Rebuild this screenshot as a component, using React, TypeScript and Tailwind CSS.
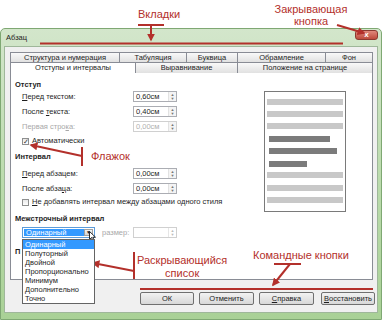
import React from "react";

const RED = "#b3302b";

function U({ children }: { children: React.ReactNode }) {
  return <span className="underline underline-offset-[1px]">{children}</span>;
}

function Spin({ value, disabled }: { value: string; disabled?: boolean }) {
  return (
    <div
      className={`flex h-[11px] w-[44px] items-center border bg-white ${
        disabled ? "border-[#d0d0d0] text-[#b0b0b0]" : "border-[#abadb3] text-[#1e1e1e]"
      }`}
    >
      <span className="flex-1 pl-[2px] leading-none">{value}</span>
      <div className="flex h-full w-[8px] flex-col items-center justify-center border-l border-[#e2e2e2] bg-[#f4f4f4] text-[4px] leading-[4px] text-[#777]">
        <span>▲</span>
        <span>▼</span>
      </div>
    </div>
  );
}

function Field({ label, value, disabled, mt }: { label: React.ReactNode; value: string; disabled?: boolean; mt: string }) {
  return (
    <div className={`flex h-[11px] items-center ${mt}`}>
      <span className={`w-[118px] pl-[7px] ${disabled ? "text-[#a8a8a8]" : ""}`}>{label}</span>
      <Spin value={value} disabled={disabled} />
    </div>
  );
}

function Check({ checked, label, mt }: { checked?: boolean; label: React.ReactNode; mt: string }) {
  return (
    <div className={`flex h-[10px] items-center whitespace-nowrap pl-[7px] ${mt}`}>
      <div className="flex h-[7px] w-[7px] items-center justify-center border border-[#8e8f8f] bg-gradient-to-b from-[#e9e9e9] to-white text-[7px] leading-none text-[#333]">
        {checked ? "✓" : ""}
      </div>
      <span className="ml-[3px]">{label}</span>
    </div>
  );
}

function Tab({ w, children, active }: { w: string; children: React.ReactNode; active?: boolean }) {
  return (
    <div
      className={`flex items-center justify-center whitespace-nowrap border-t border-r border-[#898c95] first:border-l ${w} ${
        active ? "bg-white" : "bg-gradient-to-b from-[#f9f9f9] to-[#e1e1e1]"
      }`}
    >
      {children}
    </div>
  );
}

function Btn({ w, children }: { w: string; children: React.ReactNode }) {
  return (
    <div
      className={`flex h-[13px] items-center justify-center rounded-[2px] border border-[#707070] bg-gradient-to-b from-[#f2f2f2] to-[#d8d8d8] ${w}`}
    >
      {children}
    </div>
  );
}

const bars = [
  { t: "mt-[7px]", c: "ml-[2px] w-[76px] bg-[#c8c8c8]" },
  { t: "mt-[6px]", c: "ml-[2px] w-[76px] bg-[#c8c8c8]" },
  { t: "mt-[6px]", c: "ml-[2px] w-[76px] bg-[#c8c8c8]" },
  { t: "mt-[7px]", c: "ml-[4px] w-[61px] bg-[#7b7b7b]" },
  { t: "mt-[6px]", c: "ml-[4px] w-[68px] bg-[#7b7b7b]" },
  { t: "mt-[7px]", c: "ml-[4px] w-[38px] bg-[#7b7b7b]" },
  { t: "mt-[5px]", c: "ml-[2px] w-[76px] bg-[#c8c8c8]" },
  { t: "mt-[7px]", c: "ml-[2px] w-[76px] bg-[#c8c8c8]" },
  { t: "mt-[6px]", c: "ml-[2px] w-[76px] bg-[#c8c8c8]" },
];

const options = ["Одинарный", "Полуторный", "Двойной", "Пропорционально", "Минимум", "Дополнительно", "Точно"];

export default function App() {
  return (
    <div className="relative h-[320px] w-[382px] overflow-hidden bg-white font-['Liberation_Sans',Arial,sans-serif]">
      <div className="pt-[28px]">
        {/* window */}
        <div className="flex h-[292px] flex-col rounded-t-[5px] border border-[#7fa873] bg-gradient-to-b from-[#d3e6cb] via-[#bcdcae] to-[#a9d196] px-[3px] pb-[6px]">
          {/* title bar */}
          <div className="flex h-[17px] items-start justify-between">
            <span className="mt-[5px] pl-[2px] text-[7.5px] leading-none text-[#222]">Абзац</span>
            <div className="mt-[1px] flex h-[10px] w-[23px] items-center justify-center rounded-[3px] border border-[#8a3a30] bg-gradient-to-b from-[#e0897c] to-[#bd4a3c] text-[8px] font-bold leading-none text-white">
              x
            </div>
          </div>
          {/* client area */}
          <div className="flex flex-1 flex-col border border-[#9fb79a] bg-[#f0f0f0] pl-[5px] pr-[2px] pt-[5px] text-[7.5px] leading-none text-[#1e1e1e]">
            <div className="flex h-[10px]">
              <Tab w="w-[110px]">Структура и нумерация</Tab>
              <Tab w="w-[67px]">Табуляция</Tab>
              <Tab w="w-[51px]">Буквица</Tab>
              <Tab w="w-[88px]">Обрамление</Tab>
              <Tab w="w-[47px]">Фон</Tab>
            </div>
            <div className="flex h-[11px]">
              <Tab w="w-[126px]" active>
                Отступы и интервалы
              </Tab>
              <Tab w="w-[102px]">Выравнивание</Tab>
              <Tab w="w-[135px]">Положение на странице</Tab>
            </div>
            {/* panel */}
            <div className="flex h-[207px] w-[363px] border-x border-b border-[#898c95] bg-white pl-[4px]">
              <div className="flex w-[249px] flex-col pt-[8px]">
                <div className="h-[9px] font-bold">Отступ</div>
                <Field mt="mt-[1px]" label={<><U>П</U>еред текстом:</>} value="0,60см" />
                <Field mt="mt-[4px]" label={<>После <U>т</U>екста:</>} value="0,40см" />
                <Field mt="mt-[4px]" label={<>Первая стро<U>к</U>а:</>} value="0,00см" disabled />
                <Check mt="mt-[4px]" checked label={<><U>А</U>втоматически</>} />
                <div className="mt-[7px] h-[9px] font-bold">Интервал</div>
                <Field mt="mt-[6px]" label={<><U>П</U>еред абзацем:</>} value="0,00см" />
                <Field mt="mt-[4px]" label={<>После абза<U>ц</U>а:</>} value="0,00см" />
                <Check mt="mt-[3px]" label={<><U>Н</U>е добавлять интервал между абзацами одного стиля</>} />
                <div className="mt-[8px] h-[9px] font-bold">Межстрочный интервал</div>
                <div className="mt-[3px] flex h-[11px] items-center pl-[7px]">
                  <div className="relative z-10 flex h-[11px] w-[73px] items-center border border-[#5c9bd8] bg-white p-[1px]">
                    <span className="flex h-full w-[60px] items-center bg-[#3399ff] pl-[2px] text-white">Одинарный</span>
                    <div className="ml-auto flex h-full w-[9px] items-center justify-center border border-[#a0a0a0] bg-gradient-to-b from-[#f4f4f4] to-[#d4d4d4] text-[5px] text-[#222]">
                      ▼
                    </div>
                    <svg className="absolute left-[66px] top-[3px]" width="8" height="11" viewBox="0 0 8 11">
                      <path d="M0.5 0.5 L0.5 8.5 L2.5 6.5 L4 10 L5.2 9.5 L3.8 6.2 L6.5 6.2 Z" fill="#fff" stroke="#000" strokeWidth="0.8" />
                    </svg>
                    <div className="absolute left-[-1px] top-[11px] w-[73px] border border-[#646464] bg-white">
                      {options.map((o, i) => (
                        <div
                          key={o}
                          className={`flex h-[9px] items-center whitespace-nowrap pl-[2px] ${i === 0 ? "bg-[#3399ff] text-white" : ""}`}
                        >
                          {o}
                        </div>
                      ))}
                    </div>
                  </div>
                  <span className="ml-[7px] w-[31px] text-[#a8a8a8]">размер:</span>
                  <div className="flex h-[11px] w-[44px] items-center justify-end border border-[#d0d0d0] bg-white">
                    <div className="flex h-full w-[8px] flex-col items-center justify-center border-l border-[#e6e6e6] text-[4px] leading-[4px] text-[#bbb]">
                      <span>▲</span>
                      <span>▼</span>
                    </div>
                  </div>
                </div>
                <div className="mt-[10px] h-[9px] font-bold">П</div>
              </div>
              <div className="mt-[18px] flex h-[121px] w-[82px] flex-col border border-[#7a7a7a] bg-white">
                {bars.map((b, i) => (
                  <div key={i} className={`h-[6px] ${b.t} ${b.c}`} />
                ))}
              </div>
            </div>
            {/* command buttons */}
            <div className="mt-[12px] flex gap-[5px] pl-[130px]">
              <Btn w="w-[54px]">ОК</Btn>
              <Btn w="w-[55px]">Отменить</Btn>
              <Btn w="w-[55px]">
                <span><U>С</U>правка</span>
              </Btn>
              <Btn w="w-[54px] ml-[2px]">
                <span><U>В</U>осстановить</span>
              </Btn>
            </div>
          </div>
        </div>
      </div>

      {/* annotations */}
      <svg className="pointer-events-none absolute inset-0" width="382" height="320" viewBox="0 0 382 320">
        <defs>
          <marker id="ah" viewBox="0 0 10 10" refX="8" refY="5" markerWidth="4" markerHeight="4" orient="auto">
            <path d="M0 0 L10 5 L0 10 Z" fill={RED} />
          </marker>
        </defs>
        <g stroke={RED} strokeWidth="2" fill="none">
          <line x1="138" y1="25" x2="164" y2="25" />
          <line x1="151" y1="25" x2="151" y2="40" markerEnd="url(#ah)" />
          <line x1="40" y1="43.5" x2="343" y2="43.5" />
          <line x1="337" y1="25" x2="364" y2="33" markerEnd="url(#ah)" />
          <line x1="82" y1="147" x2="82" y2="166" />
          <line x1="82" y1="156" x2="31" y2="145" markerEnd="url(#ah)" />
          <line x1="134" y1="252" x2="134" y2="279" />
          <line x1="134" y1="271" x2="93" y2="263" markerEnd="url(#ah)" />
          <line x1="274" y1="264" x2="301" y2="264" />
          <line x1="290" y1="264" x2="273" y2="285" markerEnd="url(#ah)" />
          <line x1="140" y1="289" x2="373" y2="289" />
        </g>
      </svg>
      <div className="pointer-events-none absolute left-[138px] top-[9px] text-[11px] leading-none text-[#b3302b]">Вкладки</div>
      <div className="pointer-events-none absolute left-[272px] top-[3px] w-[78px] text-center text-[11px] leading-[12px] text-[#b3302b]">
        Закрывающая
        <br />
        кнопка
      </div>
      <div className="pointer-events-none absolute left-[91px] top-[151px] text-[11px] leading-none text-[#b3302b]">Флажок</div>
      <div className="pointer-events-none absolute left-[137px] top-[254px] text-center text-[11px] leading-[13px] text-[#b3302b]">
        Раскрывающийся
        <br />
        список
      </div>
      <div className="pointer-events-none absolute left-[253px] top-[250px] text-[11px] leading-none text-[#b3302b]">Командные кнопки</div>
    </div>
  );
}
